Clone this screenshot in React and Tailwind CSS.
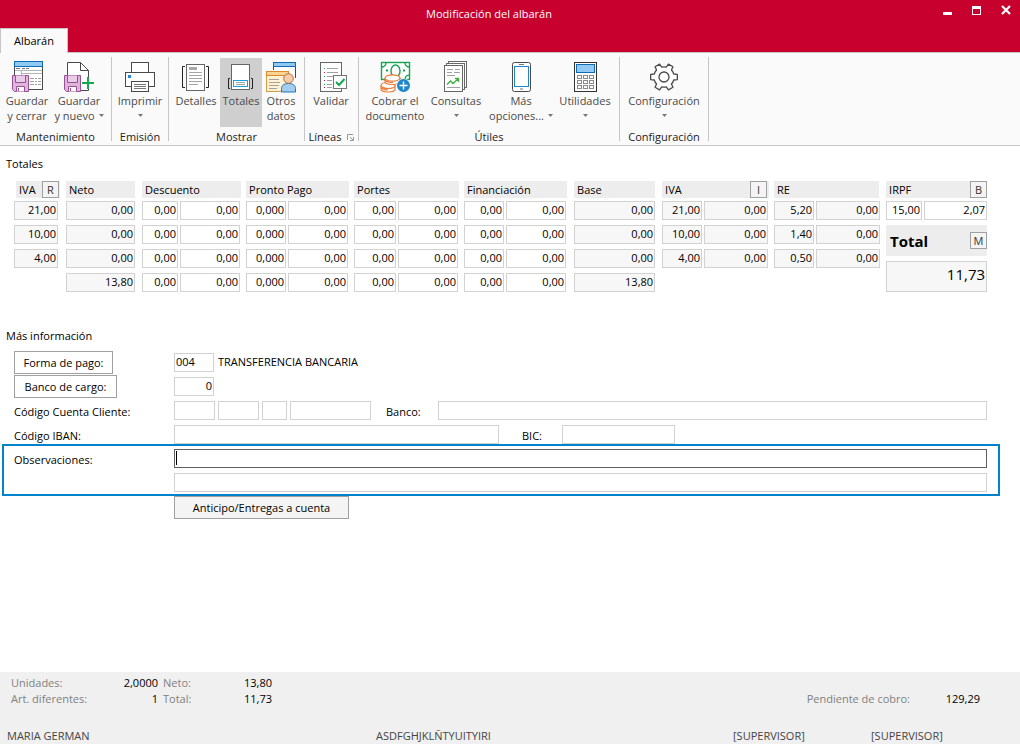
import React from "react";

const INK = "#4a4a4a";

function Icon({ children }) {
  return (
    <svg width="32" height="32" viewBox="0 0 32 32" fill="none" className="block shrink-0" aria-hidden="true">
      {children}
    </svg>
  );
}

function Floppy() {
  return (
    <g>
      <path d="M1.5 14.5H17.5V30.5H3.5L1.5 28.5Z" fill="#deb6dc" stroke="#9b4f96" />
      <path d="M4.5 14.5V21.5H14.5V14.5" fill="#e9cde8" stroke="#9b4f96" />
      <path d="M5.5 30.5V25.5H13.5V30.5" fill="#fafafa" stroke="#9b4f96" />
      <path d="M7.5 27V30" stroke="#9b4f96" />
    </g>
  );
}

function SaveCloseIcon() {
  return (
    <Icon>
      <rect x="3.5" y="0.5" width="28" height="28" fill="#fff" stroke={INK} />
      <rect x="3.5" y="0.5" width="28" height="5" fill="#91c9f2" stroke="#0e6bb5" />
      <path d="M5 7.5H9M11 7.5H14M15 7.5H18" stroke="#777" />
      <path d="M4 9.5H31M10.5 10V14M10.5 12.5H31" stroke="#b5b5b5" />
      <path d="M19 17.5H23M24 17.5H26M27 17.5H30M19 20.5H23M24 20.5H26M27 20.5H30M19 23.5H23M24 23.5H26M27 23.5H30" stroke="#a0a0a0" />
      <Floppy />
    </Icon>
  );
}

function SaveNewIcon() {
  return (
    <Icon>
      <path d="M4.5 1.5H17.5L25.5 9.5V29.5H4.5Z" fill="#fff" stroke={INK} />
      <path d="M17.5 1.5V9.5H25.5" stroke={INK} />
      <path d="M17.5 1.5L25.5 9.5" stroke={INK} />
      <Floppy />
      <path d="M19 22H31M25 16V28" stroke="#fafafa" strokeWidth="4" />
      <path d="M19 22H31M25 16V28" stroke="#17a750" strokeWidth="2" />
    </Icon>
  );
}

function PrinterIcon() {
  return (
    <Icon>
      <rect x="7.5" y="1.5" width="17" height="11" fill="#fff" stroke={INK} />
      <rect x="1.5" y="11.5" width="29" height="14" fill="#fff" stroke={INK} />
      <rect x="4" y="14" width="3" height="3" fill="#1b87d6" />
      <rect x="7.5" y="20.5" width="17" height="10" fill="#fff" stroke={INK} />
      <path d="M10 23.5H22M10 25.5H22M10 27.5H22" stroke="#777" />
    </Icon>
  );
}

function DetailsIcon() {
  return (
    <Icon>
      <rect x="6.5" y="3.5" width="18" height="26" fill="#fff" stroke="#666" />
      <path d="M5 5.5H2.5V26.5H5M26 5.5H28.5V26.5H26" stroke="#222" />
      <rect x="9" y="6" width="8" height="3" fill="#a9a9a9" />
      <path d="M9 11.5H22M9 14.5H22M9 17.5H22M9 20.5H22M9 23.5H18" stroke="#a5a5a5" />
    </Icon>
  );
}

function TotalsIcon() {
  return (
    <Icon>
      <rect x="6.5" y="3.5" width="18" height="25" fill="#fff" stroke="#666" />
      <path d="M5 17.5H3.5V27.5H5M26 17.5H27.5V27.5H26" stroke="#222" />
      <rect x="8.5" y="19.5" width="14" height="6" fill="#fff" stroke="#1a9fe0" />
      <path d="M11 21.5H20M11 23.5H20" stroke="#a5a5a5" />
    </Icon>
  );
}

function OtherDataIcon() {
  return (
    <Icon>
      <path d="M9.5 9V1.5H30.5V17" fill="#fff" />
      <path d="M30.5 5V17" stroke={INK} />
      <path d="M8.5 9V5" stroke={INK} />
      <rect x="8.5" y="1.5" width="22" height="4" fill="#91c9f2" stroke="#0e6bb5" />
      <rect x="1.5" y="10.5" width="22" height="20" fill="#fff3d6" stroke="#dc9a45" />
      <rect x="1.5" y="10.5" width="22" height="4" fill="#fbd492" stroke="#d98b2b" />
      <path d="M4 18.5H14M4 21.5H15M4 24.5H14M4 27.5H12" stroke="#a7a097" />
      <path d="M16.5 31V27.5C16.5 24.5 19 22.5 23.5 22.5S30.5 24.5 30.5 27.5V31Z" fill="#a3cdee" stroke="#1f74bb" />
      <circle cx="23.5" cy="17.5" r="4.8" fill="#f6cda8" stroke="#b06f45" />
    </Icon>
  );
}

function ValidateIcon() {
  return (
    <Icon>
      <rect x="5.5" y="1.5" width="21" height="29" fill="#fff" stroke="#666" />
      <path d="M12 7.5H23M12 11.5H23M12 15.5H18M12 19.5H17M12 23.5H17M12 26.5H17" stroke="#a0a0a0" />
      <path d="M9 7.5H10M9 15.5H10M9 23.5H10" stroke="#17a750" />
      <path d="M9 11.5H10M9 19.5H10M9 26.5H10" stroke="#c8104a" />
      <rect x="18.5" y="14.5" width="13" height="13" fill="#fff" stroke="#777" />
      <path d="M21 21L24 24L29.5 18" stroke="#17a750" strokeWidth="2" />
    </Icon>
  );
}

function CashIcon() {
  return (
    <Icon>
      <rect x="2.5" y="1.5" width="28" height="17" fill="#fff" stroke="#12a54f" strokeWidth="1.4" />
      <path d="M2.5 6C5 6 7 4 7 1.5M30.5 6C28 6 26 4 26 1.5M30.5 14C28 14 26 16 26 18.5" stroke="#12a54f" strokeWidth="1.4" />
      <ellipse cx="16.5" cy="10" rx="4.5" ry="6" stroke="#12a54f" strokeWidth="1.4" />
      <path d="M7 9.5H9M24 9.5H26" stroke="#12a54f" strokeWidth="2" />
      <g fill="#fff" stroke="#ea7a35" strokeWidth="1.2">
        <path d="M2 24.5V28C2 30 5 31 9 31S16 30 16 28V24.5" />
        <ellipse cx="9" cy="24.5" rx="7" ry="3" />
        <path d="M6 17V20.5C6 22.5 9 23.5 13.5 23.5S21 22.5 21 20.5V17" />
        <ellipse cx="13.5" cy="17" rx="7.5" ry="3.2" />
        <path d="M2.5 27C4 28.5 6 29 9 29" />
        <path d="M6 19C8 21 11 21.5 14 21.5" />
      </g>
      <circle cx="24.5" cy="24.5" r="7" fill="#fafafa" />
      <circle cx="24.5" cy="24.5" r="6.5" fill="#1f86cc" />
      <path d="M20.5 24.5H28.5M24.5 20.5V28.5" stroke="#fff" strokeWidth="1.4" />
    </Icon>
  );
}

function QueriesIcon() {
  return (
    <Icon>
      <rect x="8.5" y="0.5" width="18" height="26" fill="#fff" stroke="#666" />
      <rect x="6.5" y="2.5" width="18" height="26" fill="#fff" stroke="#666" />
      <rect x="4.5" y="4.5" width="18" height="26" fill="#fff" stroke="#666" />
      <path d="M7 8.5H13M15 8.5H20M7 11.5H12M14 11.5H20M7 14.5H15M7 26.5H20" stroke="#a0a0a0" />
      <path d="M7 23.5L10.5 20L13 22.5L18.5 17.5M15 17.5H18.5V21" stroke="#3fae3f" strokeWidth="1.3" />
    </Icon>
  );
}

function PhoneIcon() {
  return (
    <Icon>
      <rect x="7.5" y="1.5" width="18" height="29" rx="2" fill="#fff" stroke={INK} />
      <rect x="9.5" y="5.5" width="14" height="20" fill="#fff" stroke="#1f86cc" />
      <path d="M14 3.5H19M15 28H18" stroke="#777" />
    </Icon>
  );
}

function CalculatorIcon() {
  const steps = [0, 1, 2];
  return (
    <Icon>
      <rect x="5.5" y="1.5" width="22" height="29" fill="#fff" stroke="#333" />
      <rect x="7.5" y="3.5" width="18" height="8" fill="#91c9f2" stroke="#0e6bb5" />
      {steps.map((r) =>
        steps.map((c) => (
          <rect key={`${r}-${c}`} x={8.5 + c * 6} y={14.5 + r * 5} width="4" height="3" stroke="#8a8a8a" />
        ))
      )}
    </Icon>
  );
}

const GEAR_PATH = (() => {
  const at = (radius, deg) => {
    const a = (deg * Math.PI) / 180;
    return `${(16 + radius * Math.cos(a)).toFixed(2)} ${(16 + radius * Math.sin(a)).toFixed(2)}`;
  };
  let d = "";
  for (let i = 0; i < 6; i += 1) {
    const a = i * 60;
    d += `${i === 0 ? "M" : "L"}${at(10.2, a - 17)}L${at(13.6, a - 11)}L${at(13.6, a + 11)}L${at(10.2, a + 17)}`;
    d += `A10.2 10.2 0 0 1 ${at(10.2, a + 43)}`;
  }
  return `${d}Z`;
})();

function GearIcon() {
  return (
    <Icon>
      <path d={GEAR_PATH} fill="#fff" stroke={INK} strokeWidth="1.3" strokeLinejoin="round" />
      <circle cx="16" cy="16" r="5" stroke={INK} strokeWidth="1.3" />
    </Icon>
  );
}

function Caret() {
  return (
    <svg width="5" height="3" viewBox="0 0 5 3" className="inline-block align-middle" aria-hidden="true">
      <path d="M0 0H5L2.5 3Z" fill="#777" />
    </svg>
  );
}

function RibbonButton({ icon, label, second, caret, active, width }) {
  return (
    <button
      type="button"
      className={`flex h-[69px] shrink-0 flex-col items-center pt-[3px] leading-[15px] whitespace-nowrap text-[#4a4a4a] ${width} ${
        active ? "bg-[#cfcfcf]" : "hover:bg-[#e6e6e6]"
      }`}
    >
      {icon}
      <span className="block">{label}</span>
      <span className="flex h-[15px] items-center gap-1">
        {second}
        {caret && <Caret />}
      </span>
    </button>
  );
}

function RibbonGroup({ title, padding, launcher, children }) {
  return (
    <>
      <section aria-label={title} className="flex shrink-0 flex-col pt-[5px]">
        <div className={`flex ${padding}`}>{children}</div>
        <h2 className="mt-[2px] flex h-4 items-center justify-center gap-[6px] leading-4 text-[#222]">
          {title}
          {launcher && (
            <button type="button" aria-label="Opciones de líneas">
              <svg width="7" height="7" viewBox="0 0 7 7" fill="none" className="block" aria-hidden="true">
                <path d="M0.5 6V0.5H6M3 3L6 6" stroke="#999" />
                <path d="M6.5 3V6.5H3" stroke="#999" />
              </svg>
            </button>
          )}
        </h2>
      </section>
      <div className="h-[84px] w-px shrink-0 self-center bg-[#c6c6c6]" />
    </>
  );
}

function Ribbon() {
  return (
    <div className="flex h-[94px] overflow-hidden border-y border-[#c6c6c6] bg-[#fafafa]">
      <RibbonGroup title="Mantenimiento" padding="pl-[2px] pr-[5px]">
        <RibbonButton icon={<SaveCloseIcon />} label="Guardar" second="y cerrar" width="w-[50px]" />
        <RibbonButton icon={<SaveNewIcon />} label="Guardar" second="y nuevo" caret width="w-[54px]" />
      </RibbonGroup>
      <RibbonGroup title="Emisión" padding="">
        <RibbonButton icon={<PrinterIcon />} label="Imprimir" caret width="w-[56px]" />
      </RibbonGroup>
      <RibbonGroup title="Mostrar" padding="pl-[3px] pr-1">
        <RibbonButton icon={<DetailsIcon />} label="Detalles" width="w-[48px]" />
        <RibbonButton icon={<TotalsIcon />} label="Totales" active width="w-[42px]" />
        <RibbonButton icon={<OtherDataIcon />} label="Otros" second="datos" width="w-[38px]" />
      </RibbonGroup>
      <RibbonGroup title="Líneas" padding="pr-px" launcher>
        <RibbonButton icon={<ValidateIcon />} label="Validar" width="w-[52px]" />
      </RibbonGroup>
      <RibbonGroup title="Útiles" padding="px-[5px]">
        <RibbonButton icon={<CashIcon />} label="Cobrar el" second="documento" width="w-[62px]" />
        <RibbonButton icon={<QueriesIcon />} label="Consultas" caret width="w-[60px]" />
        <RibbonButton icon={<PhoneIcon />} label="Más" second="opciones..." caret width="w-[70px]" />
        <RibbonButton icon={<CalculatorIcon />} label="Utilidades" caret width="w-[58px]" />
      </RibbonGroup>
      <RibbonGroup title="Configuración" padding="">
        <RibbonButton icon={<GearIcon />} label="Configuración" caret width="w-[88px]" />
      </RibbonGroup>
    </div>
  );
}

function TitleBar() {
  return (
    <header className="flex h-[52px] flex-col justify-between bg-[#c8002d]">
      <div className="flex h-7 items-center pl-10 text-white">
        <h1 className="flex-1 text-center">Modificación del albarán</h1>
        <div className="flex w-[82px] items-start justify-end gap-5 self-start pt-[5px] pr-[9px]">
          <button type="button" aria-label="Minimizar">
            <svg width="9" height="10" viewBox="0 0 9 10" className="block" aria-hidden="true">
              <path d="M0 7H9V10H0Z" fill="#fff" />
            </svg>
          </button>
          <button type="button" aria-label="Maximizar">
            <svg width="9" height="10" viewBox="0 0 9 10" className="block" aria-hidden="true">
              <path d="M0 1H9V10H0ZM1 4V9H8V4Z" fill="#fff" fillRule="evenodd" />
            </svg>
          </button>
          <button type="button" aria-label="Cerrar">
            <svg width="10" height="10" viewBox="0 0 10 10" className="block" aria-hidden="true">
              <path d="M1 1L9 9M9 1L1 9" stroke="#fff" strokeWidth="2.2" />
            </svg>
          </button>
        </div>
      </div>
      <nav className="relative z-10 -mb-px flex">
        <button type="button" className="h-[25px] w-[68px] border border-b-0 border-[#c6c6c6] bg-[#fafafa] text-black">
          Albarán
        </button>
      </nav>
    </header>
  );
}

const COLUMNS = [
  { key: "iva", width: "w-[52px]", pad: "pr-2", locked: true, name: "IVA" },
  { key: "neto", width: "w-[76px]", pad: "pr-[7px]", locked: true, name: "Neto" },
  { key: "dto", width: "w-[38px]", pad: "pr-[2px]", name: "Descuento %" },
  { key: "dtoImp", width: "w-[66px]", pad: "pr-[6px]", name: "Descuento" },
  { key: "pp", width: "w-[42px]", pad: "pr-[2px]", name: "Pronto Pago %" },
  { key: "ppImp", width: "w-[66px]", pad: "pr-[6px]", name: "Pronto Pago" },
  { key: "por", width: "w-[44px]", pad: "pr-[2px]", name: "Portes %" },
  { key: "porImp", width: "w-[66px]", pad: "pr-[6px]", name: "Portes" },
  { key: "fin", width: "w-[42px]", pad: "pr-[2px]", name: "Financiación %" },
  { key: "finImp", width: "w-[68px]", pad: "pr-2", name: "Financiación" },
  { key: "base", width: "w-[88px]", pad: "pr-[7px]", locked: true, name: "Base" },
  { key: "ivaPct", width: "w-[42px]", pad: "pr-[2px]", locked: true, name: "IVA %" },
  { key: "ivaImp", width: "w-[70px]", pad: "pr-[6px]", locked: true, name: "Cuota IVA" },
  { key: "re", width: "w-[42px]", pad: "pr-[2px]", locked: true, name: "RE %" },
  { key: "reImp", width: "w-[70px]", pad: "pr-[6px]", locked: true, name: "Cuota RE" },
  { key: "irpf", width: "w-[38px]", pad: "pr-[2px]", name: "IRPF %" },
  { key: "irpfImp", width: "w-[63px]", pad: "", name: "IRPF" },
];

const HEADERS = [
  { label: "IVA", pad: "pr-[6px] pl-[2px]", button: "R", end: "pr-px" },
  { label: "Neto", pad: "pr-[7px]" },
  { label: "Descuento", span: 2, pad: "pr-[5px]" },
  { label: "Pronto Pago", span: 2, pad: "pr-[5px]" },
  { label: "Portes", span: 2, pad: "pr-[5px]" },
  { label: "Financiación", span: 2, pad: "pr-[7px]" },
  { label: "Base", pad: "pr-[7px]" },
  { label: "IVA", span: 2, pad: "pr-[5px]", button: "I", end: "pr-[2px]" },
  { label: "RE", span: 2, pad: "pr-[7px]" },
  { label: "IRPF", span: 2, pad: "", button: "B", end: "" },
];

const ROWS = [
  ["21,00", "0,00", "0,00", "0,00", "0,000", "0,00", "0,00", "0,00", "0,00", "0,00", "0,00", "21,00", "0,00", "5,20", "0,00", "15,00", "2,07"],
  ["10,00", "0,00", "0,00", "0,00", "0,000", "0,00", "0,00", "0,00", "0,00", "0,00", "0,00", "10,00", "0,00", "1,40", "0,00"],
  ["4,00", "0,00", "0,00", "0,00", "0,000", "0,00", "0,00", "0,00", "0,00", "0,00", "0,00", "4,00", "0,00", "0,50", "0,00"],
  [null, "13,80", "0,00", "0,00", "0,000", "0,00", "0,00", "0,00", "0,00", "0,00", "13,80", null, null, null, null],
];

function SmallButton({ children, label }) {
  return (
    <button
      type="button"
      aria-label={label}
      className="flex size-[17px] shrink-0 items-center justify-center border border-[#a0a0a0] bg-[#f4f4f4] text-[11px] leading-[15px] font-normal text-[#333]"
    >
      {children}
    </button>
  );
}

function TotalsTable() {
  return (
    <table className="w-full min-w-[973px] table-fixed border-collapse">
      <colgroup>
        {COLUMNS.map((c) => (
          <col key={c.key} className={c.width} />
        ))}
      </colgroup>
      <thead>
        <tr>
          {HEADERS.map((h, i) => (
            <th key={i} scope="col" colSpan={h.span || 1} className={`pb-[3px] text-left font-normal ${h.pad}`}>
              <div className={`flex h-[17px] items-center justify-between bg-[#ededed] pl-[3px] leading-[17px] ${h.end || ""}`}>
                {h.label}
                {h.button && <SmallButton label={`${h.label} ${h.button}`}>{h.button}</SmallButton>}
              </div>
            </th>
          ))}
        </tr>
      </thead>
      <tbody>
        {ROWS.map((row, r) => (
          <tr key={r}>
            {row.map((value, c) => {
              const col = COLUMNS[c];
              return (
                <td key={col.key} className={`pb-[5px] ${col.pad}`}>
                  {value !== null && (
                    <input
                      type="text"
                      aria-label={`${col.name}, línea ${r + 1}`}
                      defaultValue={value}
                      readOnly={col.locked}
                      className={`block h-[19px] w-full border border-[#d2d2d2] pr-px pb-[2px] text-right outline-none ${
                        col.locked ? "bg-[#f7f7f7]" : "bg-white"
                      }`}
                    />
                  )}
                </td>
              );
            })}
            {r === 1 && (
              <td rowSpan={3} colSpan={2} className="align-top">
                <div className="flex h-[31px] items-center justify-between bg-[#ededed] pl-1">
                  <label htmlFor="total" className="pt-[2px] text-[15px] font-bold">
                    Total
                  </label>
                  <SmallButton label="Total M">M</SmallButton>
                </div>
                <input
                  id="total"
                  type="text"
                  readOnly
                  defaultValue="11,73"
                  className="mt-[5px] mb-[5px] block h-[31px] w-full border border-[#d2d2d2] bg-[#f7f7f7] pr-px pb-[6px] text-right text-[15px] outline-none"
                />
              </td>
            )}
          </tr>
        ))}
      </tbody>
    </table>
  );
}

function Field({ width, border = "border-[#d2d2d2]", className = "", ...props }) {
  return (
    <input
      type="text"
      className={`block h-[19px] border bg-white px-px pb-[2px] outline-none ${border} ${width} ${className}`}
      {...props}
    />
  );
}

function FormRow({ label, children }) {
  return (
    <div className="flex h-[19px] items-center">
      <div className="flex w-[160px] shrink-0 items-center">{label}</div>
      {children}
    </div>
  );
}

const BUTTON = "h-[23px] shrink-0 border border-[#a0a0a0] pt-[2px] whitespace-nowrap";
const LABEL = "shrink-0 pt-[3px]";

function MoreInfo() {
  return (
    <section aria-labelledby="mas-info">
      <h2 id="mas-info" className="pl-[6px] leading-4">
        Más información
      </h2>
      <div className="mt-[9px] flex flex-col gap-[5px] pr-[33px] pl-[14px]">
        <FormRow
          label={
            <button type="button" className={`${BUTTON} w-[99px] bg-white`}>
              Forma de pago:
            </button>
          }
        >
          <Field width="w-10" aria-label="Forma de pago" defaultValue="004" />
          <span className="ml-1">TRANSFERENCIA BANCARIA</span>
        </FormRow>
        <FormRow
          label={
            <button type="button" className={`${BUTTON} w-[103px] bg-white`}>
              Banco de cargo:
            </button>
          }
        >
          <Field width="w-10" className="text-right" aria-label="Banco de cargo" defaultValue="0" />
        </FormRow>
        <FormRow
          label={
            <label htmlFor="ccc-entidad" className={LABEL}>
              Código Cuenta Cliente:
            </label>
          }
        >
          <div className="flex gap-[3px]">
            <Field width="w-[41px]" id="ccc-entidad" />
            <Field width="w-[41px]" aria-label="Oficina" />
            <Field width="w-[25px]" aria-label="Dígito de control" />
            <Field width="w-[81px]" aria-label="Número de cuenta" />
          </div>
          <label htmlFor="banco" className={`${LABEL} w-[67px] pl-[15px]`}>
            Banco:
          </label>
          <Field width="min-w-0 flex-1" id="banco" />
        </FormRow>
        <FormRow
          label={
            <label htmlFor="iban" className={LABEL}>
              Código IBAN:
            </label>
          }
        >
          <Field width="w-[325px]" id="iban" />
          <label htmlFor="bic" className={`${LABEL} w-[63px] pl-[23px]`}>
            BIC:
          </label>
          <Field width="w-[113px]" id="bic" />
        </FormRow>
      </div>
      <div className="mr-5 ml-[2px] flex flex-col gap-[5px] border-2 border-[#0083ca] pt-[3px] pr-[11px] pb-[2px] pl-[10px]">
        <FormRow
          label={
            <label htmlFor="obs-1" className={LABEL}>
              Observaciones:
            </label>
          }
        >
          <div className="relative min-w-0 flex-1">
            <Field width="w-full" border="border-[#5f5f5f]" id="obs-1" />
            <span className="absolute top-[2px] left-[2px] h-[14px] w-px bg-black" />
          </div>
        </FormRow>
        <FormRow>
          <Field width="min-w-0 flex-1" aria-label="Observaciones, segunda línea" />
        </FormRow>
      </div>
      <button type="button" className={`${BUTTON} ml-[174px] block w-[175px] bg-[#f4f4f4]`}>
        Anticipo/Entregas a cuenta
      </button>
    </section>
  );
}

function Footer() {
  return (
    <footer className="mt-auto flex h-[72px] flex-col justify-between bg-[#f0f0f0]">
      <div className="flex items-end justify-between pt-[3px] pr-10 pl-[11px] leading-4 text-[#808080]">
        <dl className="grid grid-cols-[92px_55px_44px_70px]">
          <dt>Unidades:</dt>
          <dd className="text-right text-black">2,0000</dd>
          <dt className="pl-[5px]">Neto:</dt>
          <dd className="text-right text-black">13,80</dd>
          <dt>Art. diferentes:</dt>
          <dd className="text-right text-black">1</dd>
          <dt className="pl-[5px]">Total:</dt>
          <dd className="text-right text-black">11,73</dd>
        </dl>
        <dl className="flex">
          <dt>Pendiente de cobro:</dt>
          <dd className="w-[70px] text-right text-black">129,29</dd>
        </dl>
      </div>
      <div className="grid grid-cols-[369fr_357fr_138fr_149fr] pl-[7px] leading-4 text-[#444]">
        <span>MARIA GERMAN</span>
        <span>ASDFGHJKLÑTYUITYIRI</span>
        <span>[SUPERVISOR]</span>
        <span>[SUPERVISOR]</span>
      </div>
    </footer>
  );
}

export default function App() {
  return (
    <div className="flex min-h-screen flex-col bg-white font-['Open_Sans','Noto_Sans',sans-serif] text-[11px] text-black">
      <TitleBar />
      <Ribbon />
      <main className="pb-8">
        <section aria-labelledby="totales" className="pt-[10px]">
          <h2 id="totales" className="pl-[6px] leading-4">
            Totales
          </h2>
          <div className="mt-[9px] mb-[31px] pr-[33px] pl-[14px]">
            <TotalsTable />
          </div>
        </section>
        <MoreInfo />
      </main>
      <Footer />
    </div>
  );
}
